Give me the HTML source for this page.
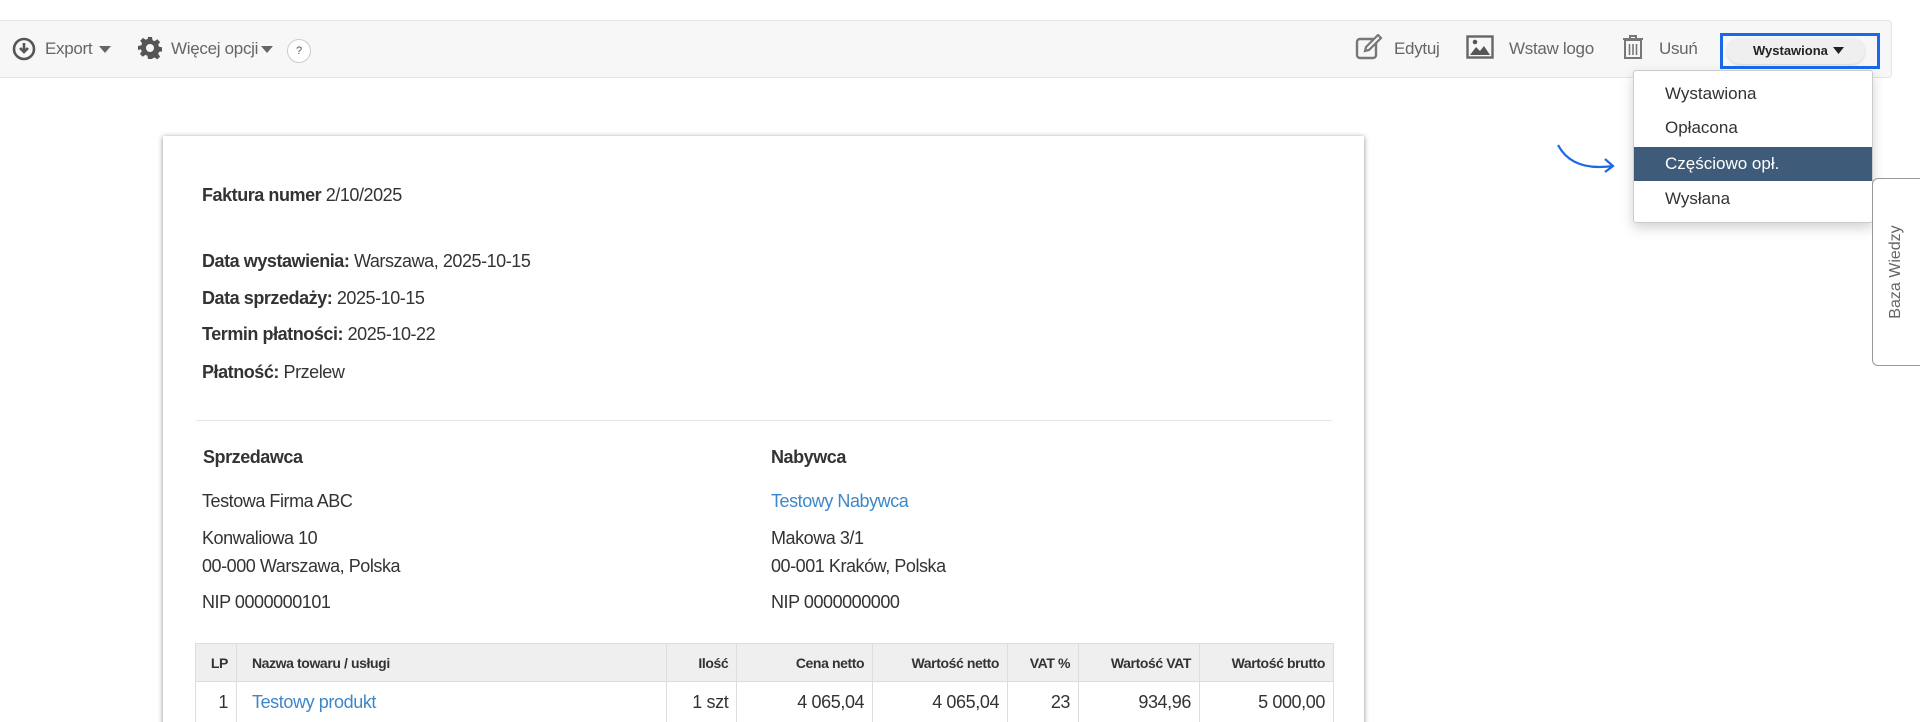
<!DOCTYPE html>
<html style="overflow:hidden;height:722px"><head><meta charset="utf-8"><style>
*{box-sizing:border-box;margin:0;padding:0}
body{width:1920px;height:722px;overflow:hidden;background:#fff;font-family:"Liberation Sans",Arial,sans-serif;color:#333;position:relative}
.tb{position:absolute;left:0;top:20px;width:1892px;height:58px;background:#f7f7f7;border:1px solid #e4e4e4;border-left:none;border-radius:0 4px 4px 0}
.t{position:absolute;font-size:17px;color:#666;top:39px;letter-spacing:-0.3px}
.ab{position:absolute}
.doc{position:absolute;left:163px;top:136px;width:1201px;height:600px;background:#fff;box-shadow:0 1px 5px rgba(0,0,0,.45)}
.d{position:absolute;font-size:18px;color:#333;white-space:nowrap;letter-spacing:-0.45px}
.d b{font-weight:bold}
.lnk{color:#3d87c8}
table{position:absolute;left:195px;top:643px;border-collapse:collapse;width:1139px}
td,th{border:1px solid #ddd;height:42px;padding:0 8px;font-size:18px;white-space:nowrap;letter-spacing:-0.4px}
th{background:#efefef;font-size:14px;font-weight:bold;height:38px;color:#333}
.r{text-align:right}.l{text-align:left}
.n{padding-left:15px}
.menu{position:absolute;left:1633px;top:70px;width:240px;height:153px;background:#fff;border:1px solid #ccc;border-radius:3px;box-shadow:0 5px 12px rgba(0,0,0,.18)}
.mi{position:absolute;left:0;width:238px;height:34px;font-size:17px;color:#333;padding-left:31px;line-height:34px}
</style></head><body>
<div class="tb"></div>
<svg class="ab" style="left:12px;top:37px" width="24" height="24" viewBox="0 0 24 24"><circle cx="12" cy="12" r="10" fill="none" stroke="#555" stroke-width="2.6"/><path d="M12 6v8M8 11l4 4 4-4" stroke="#555" stroke-width="2.6" fill="none"/></svg>
<div class="t" style="left:45px">Export</div>
<svg class="ab" style="left:99px;top:46px" width="12" height="7"><path d="M0 0h12L6 7z" fill="#666"/></svg>
<svg class="ab" style="left:138px;top:36px" width="24" height="24" viewBox="0 0 24 24"><path fill="#555" d="M10 1h4l.6 3.2 2 .9 2.7-1.9 2.8 2.8-1.9 2.7.9 2 3.2.6v4l-3.2.6-.9 2 1.9 2.7-2.8 2.8-2.7-1.9-2 .9L14 23h-4l-.6-3.2-2-.9-2.7 1.9-2.8-2.8 1.9-2.7-.9-2L0 14v-4l3.2-.6.9-2L2.200 4.7 5 1.9l2.7 1.9 2-.9z"/><circle cx="12" cy="12" r="4" fill="#f7f7f7"/></svg>
<div class="t" style="left:171px">Więcej opcji</div>
<svg class="ab" style="left:261px;top:46px" width="12" height="7"><path d="M0 0h12L6 7z" fill="#666"/></svg>
<div class="ab" style="left:287px;top:39px;width:24px;height:24px;border:1px solid #ccc;border-radius:50%;background:#fff;font-size:11px;text-align:center;line-height:22px;color:#555">?</div>

<svg class="ab" style="left:1355px;top:34px" width="28" height="26" viewBox="0 0 28 26"><rect x="2" y="5" width="19" height="19" rx="3" fill="none" stroke="#777" stroke-width="2.4"/><path d="M10 17l1-4 12-12 3 3-12 12z" fill="#f7f7f7" stroke="#777" stroke-width="2.2"/></svg>
<div class="t" style="left:1394px">Edytuj</div>
<svg class="ab" style="left:1466px;top:35px" width="28" height="24"><rect x="1.5" y="1.5" width="25" height="21" fill="none" stroke="#666" stroke-width="2.4"/><path d="M4 20l6-8 4 4 4-5 6 9z" fill="#555"/><circle cx="9" cy="7" r="2.3" fill="#555"/></svg>
<div class="t" style="left:1509px">Wstaw logo</div>
<svg class="ab" style="left:1622px;top:34px" width="22" height="26"><path d="M1 5h20M8 5V2h6v3" fill="none" stroke="#777" stroke-width="2"/><rect x="3" y="6" width="16" height="18" fill="none" stroke="#777" stroke-width="2"/><path d="M7.5 10v11M11 10v11M14.5 10v11" stroke="#777" stroke-width="1.6"/></svg>
<div class="t" style="left:1659px">Usuń</div>
<div class="ab" style="left:1720px;top:33px;width:160px;height:36px;border:3px solid #1a6ae8"></div>
<div class="ab" style="left:1727px;top:38px;width:138px;height:26px;background:#efefef;border-radius:13px;box-shadow:0 1px 2px rgba(0,0,0,.15);font-size:13px;font-weight:bold;color:#222;padding-left:26px;line-height:26px">Wystawiona</div>
<svg class="ab" style="left:1833px;top:47px" width="11" height="7"><path d="M0 0h11L5.5 7z" fill="#222"/></svg>

<div class="doc"></div>
<div class="d" style="left:202px;top:185px"><b>Faktura numer</b> 2/10/2025</div>
<div class="d" style="left:202px;top:251px"><b>Data wystawienia:</b> Warszawa, 2025-10-15</div>
<div class="d" style="left:202px;top:288px"><b>Data sprzedaży:</b> 2025-10-15</div>
<div class="d" style="left:202px;top:324px"><b>Termin płatności:</b> 2025-10-22</div>
<div class="d" style="left:202px;top:362px"><b>Płatność:</b> Przelew</div>
<div class="ab" style="left:196px;top:420px;width:1136px;height:1px;background:#e5e5e5"></div>
<div class="d" style="left:203px;top:447px"><b>Sprzedawca</b></div>
<div class="d" style="left:202px;top:491px">Testowa Firma ABC</div>
<div class="d" style="left:202px;top:528px">Konwaliowa 10</div>
<div class="d" style="left:202px;top:556px">00-000 Warszawa, Polska</div>
<div class="d" style="left:202px;top:592px">NIP 0000000101</div>
<div class="d" style="left:771px;top:447px"><b>Nabywca</b></div>
<div class="d lnk" style="left:771px;top:491px">Testowy Nabywca</div>
<div class="d" style="left:771px;top:528px">Makowa 3/1</div>
<div class="d" style="left:771px;top:556px">00-001 Kraków, Polska</div>
<div class="d" style="left:771px;top:592px">NIP 0000000000</div>
<table>
<tr><th style="width:41px" class="r">LP</th><th style="width:431px" class="l n">Nazwa towaru / usługi</th><th style="width:70px" class="r">Ilość</th><th style="width:136px" class="r">Cena netto</th><th style="width:135px" class="r">Wartość netto</th><th style="width:71px" class="r">VAT %</th><th style="width:121px" class="r">Wartość VAT</th><th style="width:134px" class="r">Wartość brutto</th></tr>
<tr><td class="r">1</td><td class="lnk n">Testowy produkt</td><td class="r">1 szt</td><td class="r">4 065,04</td><td class="r">4 065,04</td><td class="r">23</td><td class="r">934,96</td><td class="r">5 000,00</td></tr>
</table>

<div class="menu">
<div class="mi" style="top:6px">Wystawiona</div>
<div class="mi" style="top:40px">Opłacona</div>
<div class="mi" style="top:76px;background:#3e5c7a;color:#fff">Częściowo opł.</div>
<div class="mi" style="top:111px">Wysłana</div>
</div>
<svg class="ab" style="left:1555px;top:142px" width="64" height="34"><path d="M3 3C12 20 30 28 58 24" fill="none" stroke="#1a6ae8" stroke-width="2.2"/><path d="M50 17l8 7-8 6" fill="none" stroke="#1a6ae8" stroke-width="2.2"/></svg>
<div class="ab" style="left:1872px;top:178px;width:48px;height:188px;border:1px solid #999;border-right:none;border-radius:6px 0 0 6px;background:#fff"></div>
<div class="ab" style="left:1896px;top:272px;transform:translate(-50%,-50%) rotate(-90deg);font-size:16px;color:#666;white-space:nowrap">Baza Wiedzy</div>
</body></html>
